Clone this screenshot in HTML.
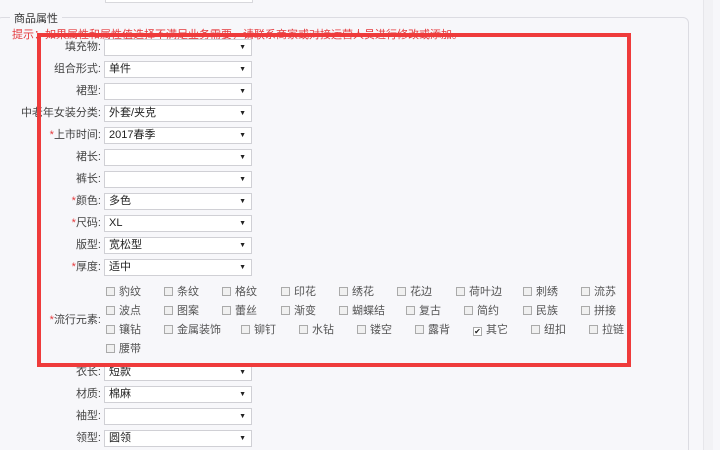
<!DOCTYPE html>
<html><head><meta charset="utf-8"><style>
*{margin:0;padding:0;box-sizing:border-box}
html,body{width:720px;height:450px;overflow:hidden}
body{background:#f7f7fa;font-family:"Liberation Sans","Noto Sans CJK SC",sans-serif;font-size:11px;color:#444;position:relative}
.a{position:absolute}
.fs{left:-4px;top:17px;width:693px;height:445px;border:1px solid #dcdce2;border-radius:6px}
.sc{left:703px;top:0;width:10px;height:450px;background:#f2f2f5;border-left:1px solid #e6e6ea}
.lbl{position:absolute;right:619px;width:100px;text-align:right;line-height:16px;white-space:nowrap}
.sel{position:absolute;left:104px;width:148px;height:17px;background:#fff;border:1px solid #d0d0d5;line-height:15px;padding-left:4px;font-size:11px;color:#222}
.sel:after{content:"▼";position:absolute;right:5px;top:0;font-size:7px;color:#222}
.st{color:#e4393c}
.cb{position:absolute;line-height:12px;white-space:nowrap;color:#555}
.cb i{display:inline-block;width:9px;height:9px;border:1px solid #aaa;background:#f0f0f0;vertical-align:-1px;margin-right:4px;font-style:normal;font-size:8px;line-height:7px;text-align:center;color:#222}
.red{left:37px;top:33px;width:594px;height:334px;border:4px solid #ef3b3b}
</style></head><body>
<div class="a sc"></div>
<div class="a" style="left:105px;top:-14px;width:148px;height:17px;background:#fff;border:1px solid #d8d8dc"></div>
<div class="a fs"></div>
<div class="a" style="left:10px;top:10px;background:#f7f7fa;padding:0 4px;font-size:11px;color:#333">商品属性</div>
<div class="a" style="left:12px;top:26px;color:#e4393c;font-size:11px;white-space:nowrap">提示：如果属性和属性值选择不满足业务需要，请联系商家或对接运营人员进行修改或添加。</div>

<div class="lbl" style="top:39px">填充物:</div><div class="sel" style="top:39px"></div>
<div class="lbl" style="top:61px">组合形式:</div><div class="sel" style="top:61px">单件</div>
<div class="lbl" style="top:83px">裙型:</div><div class="sel" style="top:83px"></div>
<div class="lbl" style="top:105px">中老年女装分类:</div><div class="sel" style="top:105px">外套/夹克</div>
<div class="lbl" style="top:127px"><span class="st">*</span>上市时间:</div><div class="sel" style="top:127px">2017春季</div>
<div class="lbl" style="top:149px">裙长:</div><div class="sel" style="top:149px"></div>
<div class="lbl" style="top:171px">裤长:</div><div class="sel" style="top:171px"></div>
<div class="lbl" style="top:193px"><span class="st">*</span>颜色:</div><div class="sel" style="top:193px">多色</div>
<div class="lbl" style="top:215px"><span class="st">*</span>尺码:</div><div class="sel" style="top:215px">XL</div>
<div class="lbl" style="top:237px">版型:</div><div class="sel" style="top:237px">宽松型</div>
<div class="lbl" style="top:259px"><span class="st">*</span>厚度:</div><div class="sel" style="top:259px">适中</div>
<div class="lbl" style="top:312px"><span class="st">*</span>流行元素:</div>

<div class="cb" style="left:106px;top:286px"><i></i>豹纹</div>
<div class="cb" style="left:164px;top:286px"><i></i>条纹</div>
<div class="cb" style="left:222px;top:286px"><i></i>格纹</div>
<div class="cb" style="left:281px;top:286px"><i></i>印花</div>
<div class="cb" style="left:339px;top:286px"><i></i>绣花</div>
<div class="cb" style="left:397px;top:286px"><i></i>花边</div>
<div class="cb" style="left:456px;top:286px"><i></i>荷叶边</div>
<div class="cb" style="left:523px;top:286px"><i></i>刺绣</div>
<div class="cb" style="left:581px;top:286px"><i></i>流苏</div>

<div class="cb" style="left:106px;top:305px"><i></i>波点</div>
<div class="cb" style="left:164px;top:305px"><i></i>图案</div>
<div class="cb" style="left:222px;top:305px"><i></i>蕾丝</div>
<div class="cb" style="left:281px;top:305px"><i></i>渐变</div>
<div class="cb" style="left:339px;top:305px"><i></i>蝴蝶结</div>
<div class="cb" style="left:406px;top:305px"><i></i>复古</div>
<div class="cb" style="left:464px;top:305px"><i></i>简约</div>
<div class="cb" style="left:523px;top:305px"><i></i>民族</div>
<div class="cb" style="left:581px;top:305px"><i></i>拼接</div>

<div class="cb" style="left:106px;top:324px"><i></i>镶钻</div>
<div class="cb" style="left:164px;top:324px"><i></i>金属装饰</div>
<div class="cb" style="left:241px;top:324px"><i></i>铆钉</div>
<div class="cb" style="left:299px;top:324px"><i></i>水钻</div>
<div class="cb" style="left:357px;top:324px"><i></i>镂空</div>
<div class="cb" style="left:415px;top:324px"><i></i>露背</div>
<div class="cb" style="left:473px;top:324px"><i style="background:#fff">✔</i>其它</div>
<div class="cb" style="left:531px;top:324px"><i></i>纽扣</div>
<div class="cb" style="left:589px;top:324px"><i></i>拉链</div>

<div class="cb" style="left:106px;top:343px"><i></i>腰带</div>

<div class="lbl" style="top:364px">衣长:</div><div class="sel" style="top:364px">短款</div>
<div class="lbl" style="top:386px">材质:</div><div class="sel" style="top:386px">棉麻</div>
<div class="lbl" style="top:408px">袖型:</div><div class="sel" style="top:408px"></div>
<div class="lbl" style="top:430px">领型:</div><div class="sel" style="top:430px">圆领</div>

<div class="a red"></div>
</body></html>
